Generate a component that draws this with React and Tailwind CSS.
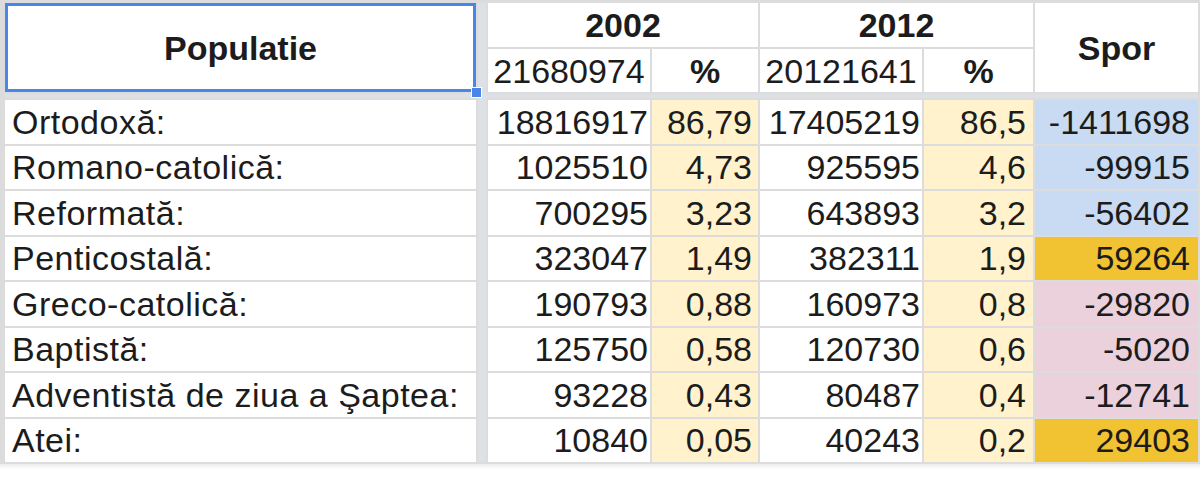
const rows = [
  { name: "Ortodoxă:", a: "18816917", ap: "86,79", b: "17405219", bp: "86,5", spor: "-1411698", tone: "blue" },
  { name: "Romano-catolică:", a: "1025510", ap: "4,73", b: "925595", bp: "4,6", spor: "-99915", tone: "blue" },
  { name: "Reformată:", a: "700295", ap: "3,23", b: "643893", bp: "3,2", spor: "-56402", tone: "blue" },
  { name: "Penticostală:", a: "323047", ap: "1,49", b: "382311", bp: "1,9", spor: "59264", tone: "gold" },
  { name: "Greco-catolică:", a: "190793", ap: "0,88", b: "160973", bp: "0,8", spor: "-29820", tone: "pink" },
  { name: "Baptistă:", a: "125750", ap: "0,58", b: "120730", bp: "0,6", spor: "-5020", tone: "pink" },
  { name: "Adventistă de ziua a Şaptea:", a: "93228", ap: "0,43", b: "80487", bp: "0,4", spor: "-12741", tone: "pink" },
  { name: "Atei:", a: "10840", ap: "0,05", b: "40243", bp: "0,2", spor: "29403", tone: "gold" },
];

const toneBg = {
  blue: "bg-[#c9daf3]",
  gold: "bg-[#f1c232]",
  pink: "bg-[#ead1dc]",
};

export default function App() {
  return (
    <div className="relative w-[1200px] h-[488px] bg-white text-[#1c1c1c] font-['Liberation_Sans',Arial,sans-serif] text-[34px] leading-none overflow-hidden">
      <div className="bg-[#dcdcdc] pl-[5px] pr-[2px] pt-[3px] pb-[2px]">
        <div className="grid grid-cols-[471px_8px_162px_106px_162px_109px_163px] grid-rows-[44px_43px_4px_repeat(8,43.5px)] gap-[2px]">
          {/* frozen pane separators */}
          <div className="col-start-2 row-start-1 row-span-11 bg-[#dde1e6]" />
          <div className="col-span-full row-start-3 bg-[#dde1e6]" />

          {/* header */}
          <div className="col-start-1 row-start-1 row-span-2 bg-white border-[3px] border-[#4a86e8] flex items-center justify-center font-bold">
            Populatie
          </div>
          <div className="col-start-3 col-span-2 row-start-1 bg-white flex items-center justify-center font-bold">
            2002
          </div>
          <div className="col-start-5 col-span-2 row-start-1 bg-white flex items-center justify-center font-bold">
            2012
          </div>
          <div className="col-start-7 row-start-1 row-span-2 bg-white flex items-center justify-center font-bold">
            Spor
          </div>
          <div className="col-start-3 row-start-2 bg-white flex items-center justify-center">21680974</div>
          <div className="col-start-4 row-start-2 bg-white flex items-center justify-center font-bold">%</div>
          <div className="col-start-5 row-start-2 bg-white flex items-center justify-center">20121641</div>
          <div className="col-start-6 row-start-2 bg-white flex items-center justify-center font-bold">%</div>

          {/* data */}
          {rows.map((r) => (
            <Row key={r.name} r={r} />
          ))}
        </div>
      </div>
      <div className="h-[5px] bg-gradient-to-b from-[#ececec] to-white" />

      {/* selection handle */}
      <div className="absolute left-[471px] top-[87px] w-[11px] h-[11px] bg-[#4a86e8] border border-white" />
    </div>
  );
}

function Row({ r }) {
  return (
    <>
      <div className="col-start-1 bg-white flex items-center pl-[7px] whitespace-nowrap tracking-[0.5px]">{r.name}</div>
      <div className="col-start-3 bg-white flex items-center justify-end pr-[2px]">{r.a}</div>
      <div className="col-start-4 bg-[#fff2cc] flex items-center justify-end pr-[6px]">{r.ap}</div>
      <div className="col-start-5 bg-white flex items-center justify-end pr-[2px]">{r.b}</div>
      <div className="col-start-6 bg-[#fff2cc] flex items-center justify-end pr-[7px]">{r.bp}</div>
      <div className={`col-start-7 ${toneBg[r.tone]} flex items-center justify-end pr-[8px]`}>{r.spor}</div>
    </>
  );
}
